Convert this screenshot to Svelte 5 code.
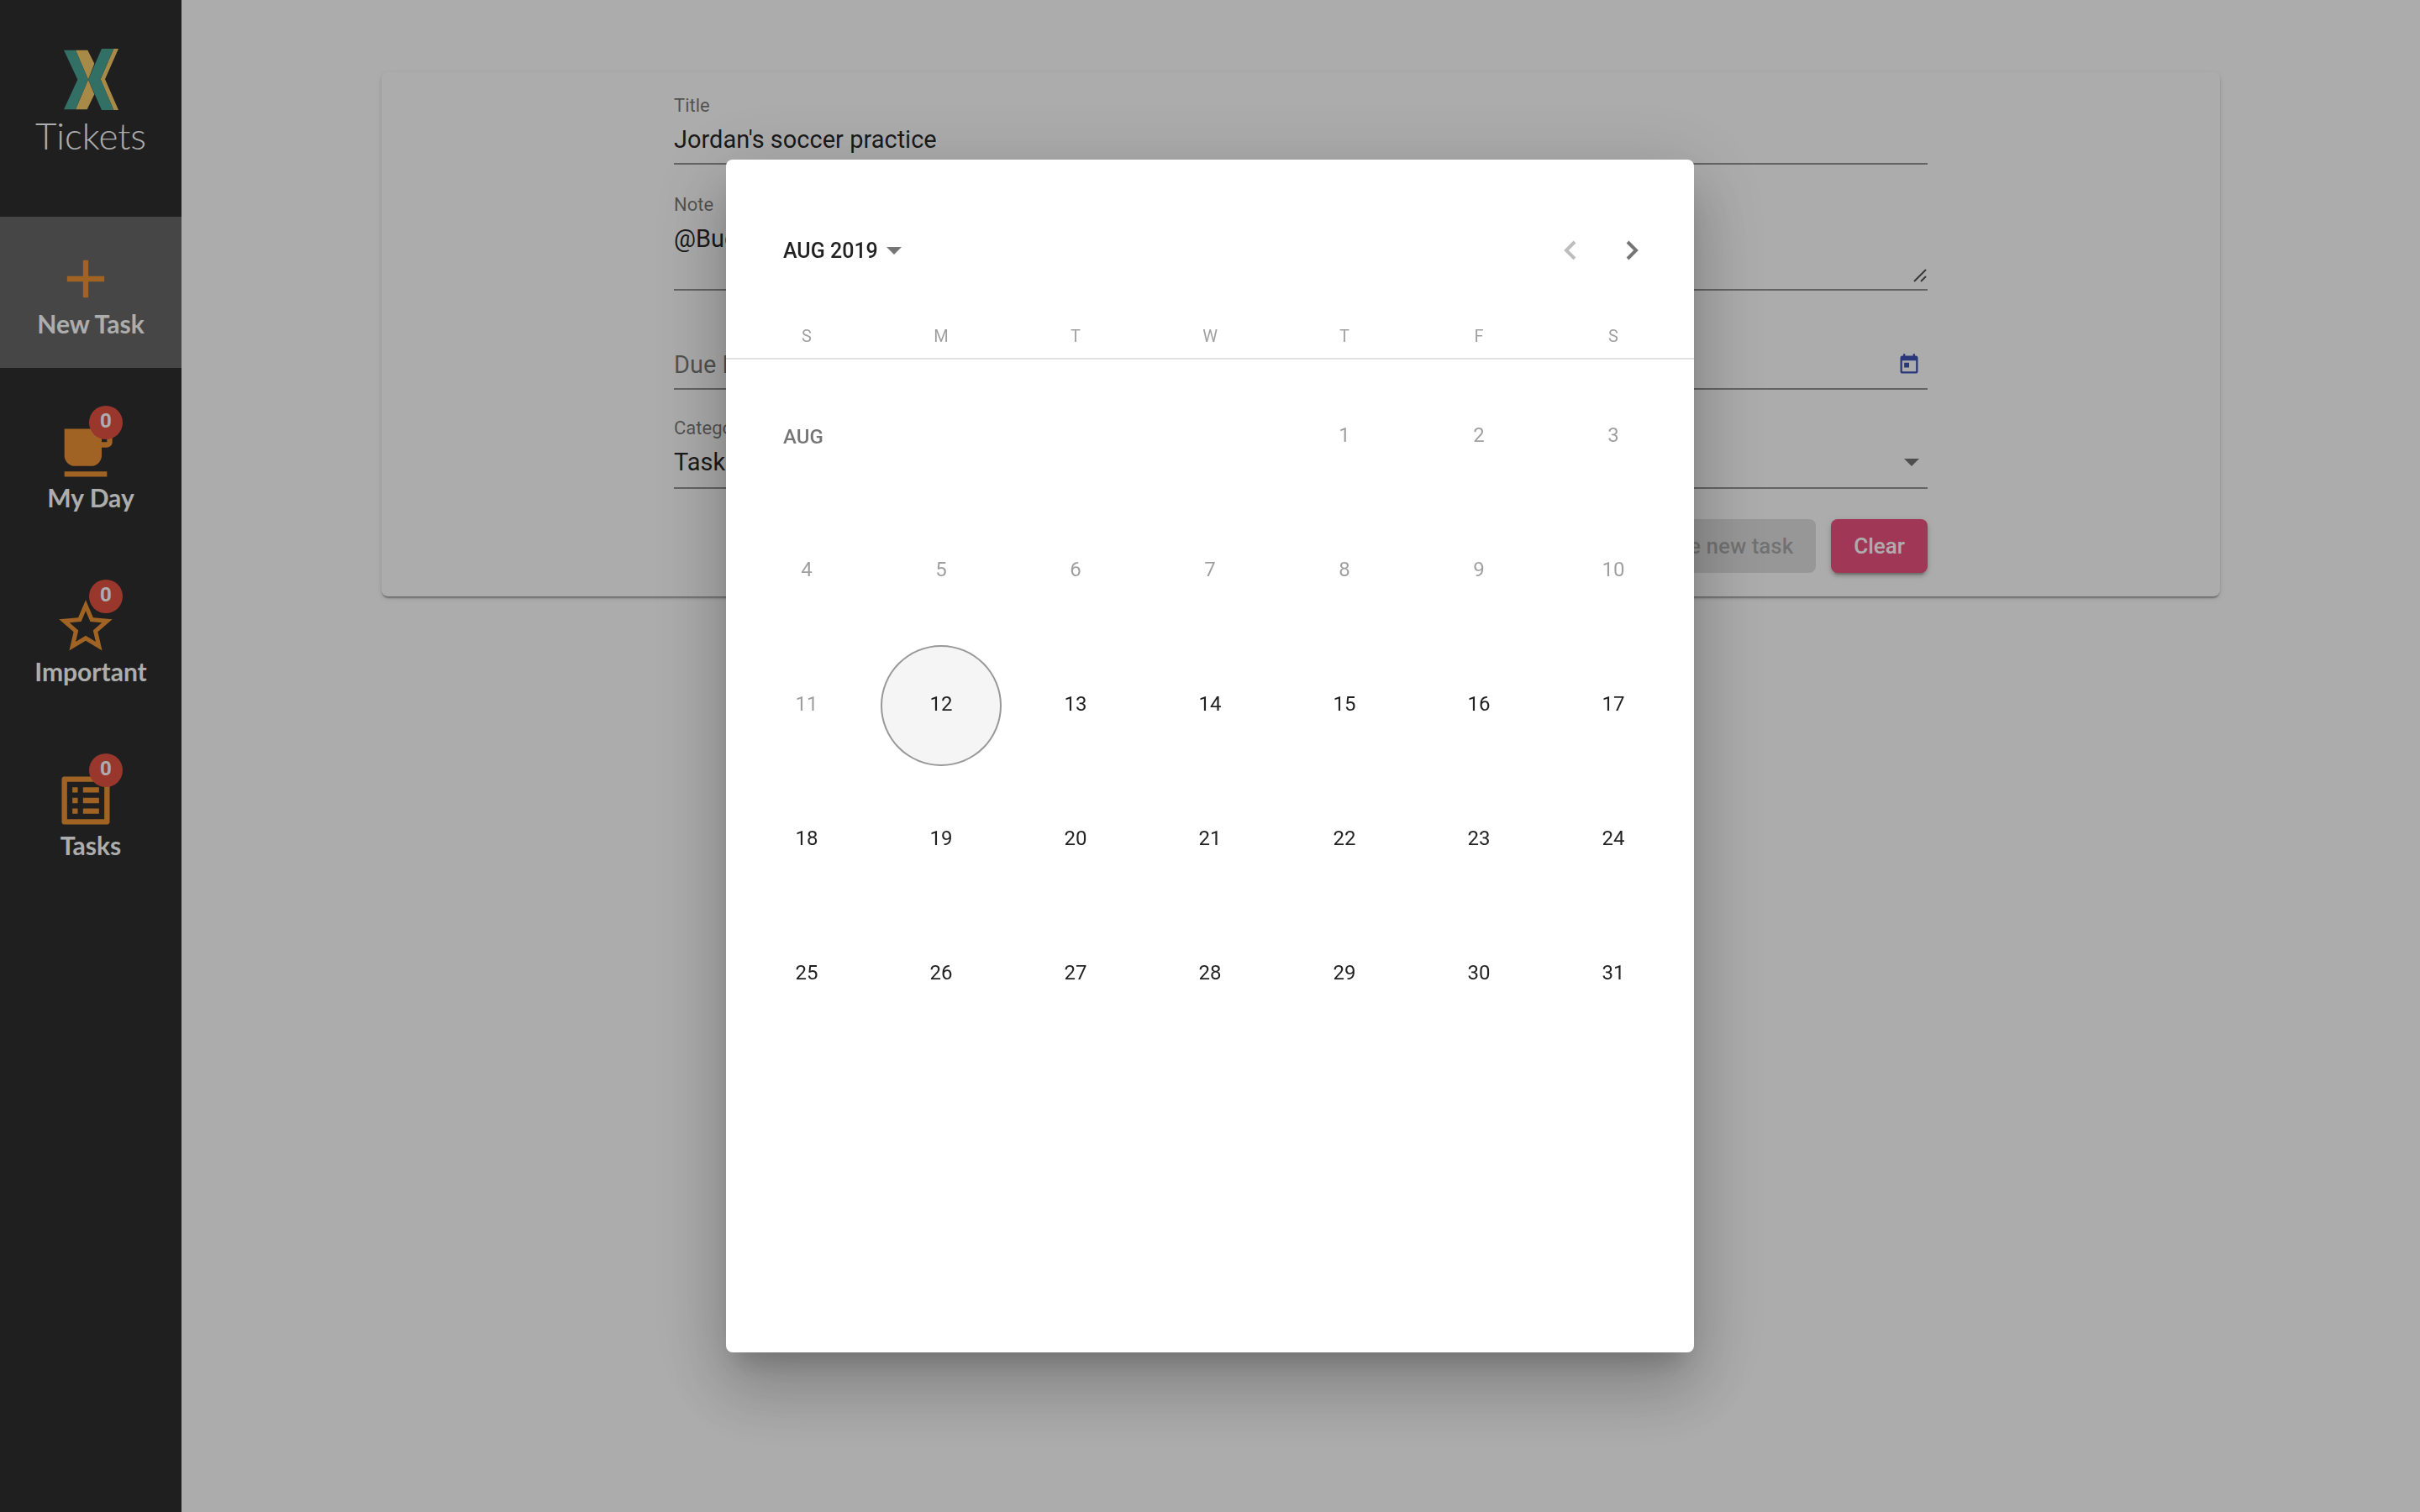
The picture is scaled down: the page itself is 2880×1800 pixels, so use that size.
<script>
  const weekdays = [
    ['S', 'Sunday'],
    ['M', 'Monday'],
    ['T', 'Tuesday'],
    ['W', 'Wednesday'],
    ['T', 'Thursday'],
    ['F', 'Friday'],
    ['S', 'Saturday'],
  ];
  const today = 12;
  const firstOffset = 4;
  const weeks = [0, 1, 2, 3, 4].map((w) =>
    [0, 1, 2, 3, 4, 5, 6].map((d) => w * 7 + d - firstOffset + 1)
  );

  let note = $state('@Buddy');

  const nav = [
    { label: 'New Task', href: '#new', badge: null, active: true, icon: 'M19 13h-6v6h-2v-6H5v-2h6V5h2v6h6v2z' },
    {
      label: 'My Day',
      href: '#my-day',
      badge: 0,
      active: false,
      icon: 'M20 3H4v10c0 2.21 1.79 4 4 4h6c2.21 0 4-1.79 4-4v-3h2c1.11 0 2-.9 2-2V5c0-1.11-.89-2-2-2zm0 5h-2V5h2v3zM4 19h16v2H4z',
    },
    {
      label: 'Important',
      href: '#important',
      badge: 0,
      active: false,
      icon: 'M22 9.24l-7.19-.62L12 2 9.19 8.63 2 9.24l5.46 4.73L5.82 21 12 17.27 18.18 21l-1.63-7.03L22 9.24zM12 15.4l-3.76 2.27 1-4.28-3.32-2.88 4.38-.38L12 6.1l1.71 4.04 4.38.38-3.32 2.88 1 4.28L12 15.4z',
    },
    {
      label: 'Tasks',
      href: '#tasks',
      badge: 0,
      active: false,
      icon: 'M19 5v14H5V5h14m1.1-2H3.9c-.5 0-.9.4-.9.9v16.2c0 .4.4.9.9.9h16.2c.4 0 .9-.5.9-.9V3.9c0-.5-.5-.9-.9-.9zM11 7h6v2h-6V7zm0 4h6v2h-6v-2zm0 4h6v2h-6zM7 7h2v2H7zm0 4h2v2H7zm0 4h2v2H7z',
    },
  ];
</script>

<div class="app">
  <aside class="sidebar">
    <a class="brand" href="#home">
      <svg class="logo" viewBox="48 25 195 219" aria-hidden="true">
        <path fill="#f7cb6a" d="M90 30h43l24 48-22 57 22 53-26 54H90l45-107zM226 25h17l-48 109 48 110h-17l-47-110z" />
        <path fill="#4aa496" d="M48 30h42l45 105-45 107H48l49-107zM183 25h43l-47 109 47 110h-43l-48-109z" />
      </svg>
      <span class="brand-name">Tickets</span>
    </a>
    <nav class="nav">
      {#each nav as item}
        <a class="nav-item" class:active={item.active} href={item.href}>
          <span class="icon-wrap">
            <svg class="nav-icon" viewBox="0 0 24 24" aria-hidden="true"><path d={item.icon} /></svg>
            {#if item.badge !== null}<span class="badge">{item.badge}</span>{/if}
          </span>
          <span class="nav-label">{item.label}</span>
        </a>
      {/each}
    </nav>
  </aside>

  <main class="main">
    <form class="card">
      <div class="field">
        <label for="title">Title</label>
        <input id="title" type="text" value="Jordan's soccer practice" />
      </div>
      <div class="field note">
        <label for="note">Note</label>
        <textarea id="note" rows="1" bind:value={note}></textarea>
        <svg class="grip" viewBox="0 0 16 16" aria-hidden="true"><path d="M1 15L15 1M9 15l6-6" /></svg>
      </div>
      <div class="field due">
        <input id="due" type="text" placeholder="Due Date" aria-label="Due Date" />
        <button class="date-toggle" type="button" aria-label="Open calendar">
          <svg viewBox="0 0 24 24" aria-hidden="true"><path d="M19 3h-1V1h-2v2H8V1H6v2H5c-1.11 0-1.99.9-1.99 2L3 19c0 1.1.89 2 2 2h14c1.1 0 2-.9 2-2V5c0-1.1-.9-2-2-2zm0 16H5V8h14v11zM7 10h5v5H7z" /></svg>
        </button>
      </div>
      <div class="field category">
        <label for="category">Category</label>
        <select id="category"><option>Tasks</option></select>
        <span class="caret select-caret"></span>
      </div>
      <div class="actions">
        <button class="btn" type="submit" disabled>Create new task</button>
        <button class="btn clear" type="reset">Clear</button>
      </div>
    </form>
  </main>

  <div class="backdrop">
    <div class="dialog" role="dialog" aria-label="Choose date">
      <div class="cal-header">
        <button class="period" type="button">AUG 2019<span class="caret"></span></button>
        <div class="pager">
          <button type="button" aria-label="Previous month" disabled>
            <svg viewBox="0 0 24 24" aria-hidden="true"><path d="M17 2L7 12l10 10" /></svg>
          </button>
          <button type="button" aria-label="Next month">
            <svg viewBox="0 0 24 24" aria-hidden="true"><path d="M7 2l10 10L7 22" /></svg>
          </button>
        </div>
      </div>
      <table class="calendar">
        <colgroup>
          <col class="edge" />
          <col span="5" />
          <col class="edge" />
        </colgroup>
        <thead>
          <tr>
            {#each weekdays as [short, full]}<th scope="col" aria-label={full}>{short}</th>{/each}
          </tr>
        </thead>
        <tbody>
          {#each weeks as week}
            <tr>
              {#if week[0] < 1}
                <td class="month" colspan={firstOffset}>AUG</td>
              {/if}
              {#each week.filter((d) => d > 0) as day}
                <td>
                  <button class="day" class:today={day === today} type="button" disabled={day < today}>{day}</button>
                </td>
              {/each}
            </tr>
          {/each}
        </tbody>
      </table>
    </div>
  </div>
</div>

<style>
  :global(body) {
    margin: 0;
  }
  .app {
    display: flex;
    min-height: 100vh;
    background: #fefefe;
    font-family: Roboto, sans-serif;
    font-size: 29px;
    color: rgba(0, 0, 0, 0.87);
  }
  button,
  input,
  textarea,
  select {
    margin: 0;
    padding: 0;
    border: 0;
    background: none;
    font: inherit;
    color: inherit;
    outline: none;
  }

  .sidebar {
    flex: none;
    width: 216px;
    background: #2e2e2e;
    font-family: Lato, sans-serif;
    color: #fff;
  }
  .sidebar a {
    color: inherit;
    text-decoration: none;
  }
  .brand {
    display: flex;
    flex-direction: column;
    align-items: center;
    box-sizing: border-box;
    height: 258px;
    padding-top: 58px;
  }
  .logo {
    width: 65px;
    height: 73px;
  }
  .brand-name {
    margin-top: 6px;
    font-size: 44px;
    font-weight: 300;
    line-height: 48px;
  }
  .nav {
    display: flex;
    flex-direction: column;
    gap: 27px;
  }
  .nav-item {
    display: flex;
    flex-direction: column;
    align-items: center;
    box-sizing: border-box;
    height: 180px;
    padding-top: 36px;
  }
  .nav-item.active {
    background: #686868;
  }
  .icon-wrap {
    position: relative;
    height: 76px;
    margin-right: 12px;
  }
  .nav-icon {
    display: block;
    width: 76px;
    height: 76px;
    fill: #ee9335;
  }
  .badge {
    position: absolute;
    top: -18px;
    right: -6px;
    width: 40px;
    height: 40px;
    border-radius: 50%;
    background: #e25141;
    font: 700 24px/37px Roboto, sans-serif;
    text-align: center;
  }
  .nav-label {
    font-size: 30px;
    font-weight: 700;
    line-height: 30px;
  }

  .main {
    flex: 1;
    padding: 86px 238px;
  }
  .card {
    padding: 22px 348px 28px;
    border-radius: 8px;
    box-shadow: 0 4px 2px -2px rgba(0, 0, 0, 0.2), 0 2px 2px rgba(0, 0, 0, 0.14), 0 2px 6px rgba(0, 0, 0, 0.12);
  }
  .field {
    position: relative;
    display: flex;
    flex-direction: column;
    justify-content: flex-end;
    box-sizing: border-box;
    height: 118px;
    padding-bottom: 10px;
    border-bottom: 2px solid rgba(0, 0, 0, 0.42);
  }
  .field:first-child {
    height: 88px;
  }
  .field.note {
    height: 150px;
    padding-bottom: 42px;
  }
  .field.category {
    padding-bottom: 12px;
  }
  .field label {
    font-size: 22px;
    line-height: 24px;
    margin-bottom: 10px;
    color: rgba(0, 0, 0, 0.54);
  }
  .field input,
  .field textarea,
  .field select {
    display: block;
    width: 100%;
    height: 36px;
    line-height: 36px;
    resize: none;
    overflow: hidden;
    appearance: none;
  }
  .field input::placeholder {
    color: rgba(0, 0, 0, 0.54);
    opacity: 1;
  }
  .grip {
    position: absolute;
    right: 1px;
    bottom: 8px;
    width: 16px;
    height: 16px;
    fill: none;
    stroke: #555;
    stroke-width: 2;
  }
  .field.due {
    flex-direction: row;
    align-items: flex-end;
  }
  .date-toggle {
    flex: none;
    width: 44px;
    height: 36px;
  }
  .date-toggle svg {
    display: block;
    width: 28px;
    height: 28px;
    margin: 0 auto;
    fill: #3f51b5;
  }
  .caret {
    width: 0;
    height: 0;
    border: 9px solid transparent;
    border-top-color: rgba(0, 0, 0, 0.54);
    border-bottom-width: 0;
  }
  .select-caret {
    position: absolute;
    right: 10px;
    bottom: 25px;
  }
  .actions {
    display: flex;
    justify-content: flex-end;
    gap: 18px;
    margin-top: 36px;
  }
  .btn {
    height: 64px;
    padding: 0 27px;
    border-radius: 8px;
    background: rgba(0, 0, 0, 0.12);
    font-size: 26px;
    font-weight: 500;
    color: rgba(0, 0, 0, 0.26);
  }
  .btn.clear {
    background: #ed5280;
    color: #fff;
    box-shadow: 0 6px 2px -4px rgba(0, 0, 0, 0.2), 0 4px 4px rgba(0, 0, 0, 0.14), 0 2px 10px rgba(0, 0, 0, 0.12);
  }

  .backdrop {
    position: fixed;
    inset: 0;
    display: flex;
    align-items: center;
    justify-content: center;
    background: rgba(0, 0, 0, 0.32);
  }
  .dialog {
    box-sizing: border-box;
    width: 1152px;
    min-height: 1420px;
    border-radius: 8px;
    background: #fff;
    box-shadow: 0 22px 30px -14px rgba(0, 0, 0, 0.2), 0 48px 76px 6px rgba(0, 0, 0, 0.14), 0 18px 92px 16px rgba(0, 0, 0, 0.12);
  }
  .cal-header {
    display: flex;
    align-items: center;
    justify-content: space-between;
    padding: 72px 38px 46px 68px;
  }
  .period {
    display: flex;
    align-items: center;
    gap: 10px;
    font-size: 25px;
    font-weight: 500;
  }
  .pager {
    display: flex;
  }
  .pager button {
    display: flex;
    align-items: center;
    justify-content: center;
    width: 73px;
    height: 72px;
    color: rgba(0, 0, 0, 0.54);
  }
  .pager button:disabled {
    color: rgba(0, 0, 0, 0.26);
  }
  .pager svg {
    width: 24px;
    height: 24px;
    fill: none;
    stroke: currentColor;
    stroke-width: 4;
  }
  .calendar {
    width: 100%;
    table-layout: fixed;
    border-collapse: separate;
    border-spacing: 0;
  }
  .calendar .edge {
    width: 176px;
  }
  .calendar th {
    height: 40px;
    padding: 0 0 6px;
    border-bottom: 2px solid rgba(0, 0, 0, 0.12);
    font-size: 20px;
    font-weight: 400;
    color: rgba(0, 0, 0, 0.38);
  }
  .calendar tbody::before {
    content: '';
    display: block;
    height: 12px;
  }
  .calendar td {
    height: 160px;
    padding: 0;
    text-align: center;
  }
  .calendar tr > :first-child {
    padding-left: 16px;
  }
  .calendar tr > :last-child {
    padding-right: 16px;
  }
  .calendar tr > .month:first-child {
    padding-left: 68px;
    font-size: 24px;
    font-weight: 500;
    text-align: left;
    color: rgba(0, 0, 0, 0.54);
  }
  .day {
    display: block;
    box-sizing: border-box;
    width: 144px;
    height: 144px;
    margin: 0 auto;
    padding-bottom: 4px;
    border: 2px solid transparent;
    border-radius: 50%;
    font-size: 24px;
  }
  .day:disabled {
    color: rgba(0, 0, 0, 0.38);
  }
  .day.today {
    border-color: rgba(0, 0, 0, 0.38);
    background: #f5f5f5;
  }
</style>
